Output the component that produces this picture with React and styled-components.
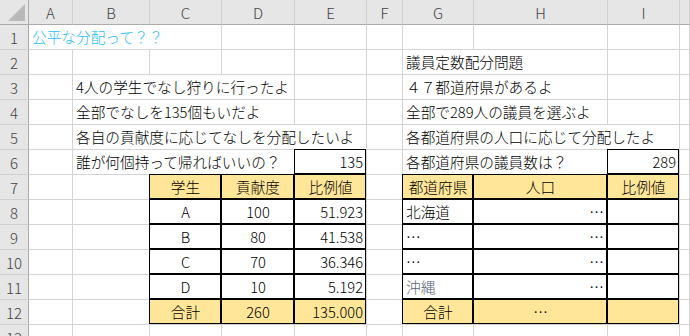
import React from 'react';
import styled, { createGlobalStyle } from 'styled-components';

const GlobalStyle = createGlobalStyle`
	html, body {
		margin: 0;
		padding: 0;
		background: #fff;
		overflow: hidden;
	}
`;

const COLUMNS = ['A', 'B', 'C', 'D', 'E', 'F', 'G', 'H', 'I', 'J'];

const Sheet = styled.div`
	display: grid;
	grid-template-columns: 29px 44px 77px 72px 73px 72px 36px 71px 134px 72px 1fr;
	grid-auto-rows: 25px;
	width: 690px;
	height: 336px;
	overflow: hidden;
	font-family: 'Noto Sans CJK JP', 'Noto Sans', sans-serif;
	font-size: 14.67px;
	font-weight: 300;
	color: #000;
`;

const Corner = styled.div`
	position: relative;
	background: #e6e6e6;
	border-right: 1px solid #ababab;
	border-bottom: 1px solid #ababab;
	box-sizing: border-box;
	display: flex;
	align-items: flex-end;
	justify-content: flex-end;
	padding: 0 3px 3px 0;

	svg {
		display: block;
	}
`;

const ColHead = styled.div`
	background: #e6e6e6;
	border-right: 1px solid #d0d0d0;
	border-bottom: 1px solid #ababab;
	box-sizing: border-box;
	display: flex;
	align-items: center;
	justify-content: center;
	color: #444;
	font-size: 15px;
	line-height: 1;
	padding-top: 1px;
`;

const RowHead = styled.div`
	background: #e6e6e6;
	border-right: 1px solid #ababab;
	border-bottom: 1px solid #d0d0d0;
	box-sizing: border-box;
	display: flex;
	align-items: center;
	justify-content: center;
	color: #444;
	font-size: 15px;
	line-height: 1;
	padding-top: 1px;
`;

const Cell = styled.div`
	position: relative;
	grid-column: span ${(p) => p.$span || 1};
	background: ${(p) => (p.$fill ? '#ffe699' : '#fff')};
	color: ${(p) => p.$color || '#000'};
	border-right: 1px solid #d4d4d4;
	border-bottom: 1px solid #d4d4d4;
	box-sizing: border-box;
	display: flex;
	align-items: center;
	justify-content: ${(p) =>
		p.$align === 'right' ? 'flex-end' : p.$align === 'center' ? 'center' : 'flex-start'};
	padding: 1px 3px 0;
	white-space: nowrap;
	overflow: visible;
	line-height: 1;

	${(p) =>
		p.$box &&
		`
		&::after {
			content: '';
			position: absolute;
			left: -1px;
			top: -1px;
			right: 0;
			bottom: 0;
			border: 1px solid #000;
			pointer-events: none;
			z-index: 1;
		}
	`}
`;

const HEAD = { align: 'center', fill: true, box: true };
const BODY = { box: true };

const rows = [
	{ A: { t: '公平な分配って？？', span: 3, color: '#2bbdf2' } },
	{ G: { t: '議員定数配分問題', span: 2 } },
	{
		B: { t: '4人の学生でなし狩りに行ったよ', span: 3 },
		G: { t: '４７都道府県があるよ', span: 2 },
	},
	{
		B: { t: '全部でなしを135個もいだよ', span: 3 },
		G: { t: '全部で289人の議員を選ぶよ', span: 2 },
	},
	{
		B: { t: '各自の貢献度に応じてなしを分配したいよ', span: 4 },
		G: { t: '各都道府県の人口に応じて分配したよ', span: 3 },
	},
	{
		B: { t: '誰が何個持って帰ればいいの？', span: 3 },
		E: { t: '135', align: 'right', box: true },
		G: { t: '各都道府県の議員数は？', span: 2 },
		I: { t: '289', align: 'right', box: true },
	},
	{
		C: { t: '学生', ...HEAD },
		D: { t: '貢献度', ...HEAD },
		E: { t: '比例値', ...HEAD },
		G: { t: '都道府県', ...HEAD },
		H: { t: '人口', ...HEAD },
		I: { t: '比例値', ...HEAD },
	},
	{
		C: { t: 'A', align: 'center', ...BODY },
		D: { t: '100', align: 'center', ...BODY },
		E: { t: '51.923', align: 'right', ...BODY },
		G: { t: '北海道', ...BODY },
		H: { t: '…', align: 'right', ...BODY },
		I: { ...BODY },
	},
	{
		C: { t: 'B', align: 'center', ...BODY },
		D: { t: '80', align: 'center', ...BODY },
		E: { t: '41.538', align: 'right', ...BODY },
		G: { t: '…', ...BODY },
		H: { t: '…', align: 'right', ...BODY },
		I: { ...BODY },
	},
	{
		C: { t: 'C', align: 'center', ...BODY },
		D: { t: '70', align: 'center', ...BODY },
		E: { t: '36.346', align: 'right', ...BODY },
		G: { t: '…', ...BODY },
		H: { t: '…', align: 'right', ...BODY },
		I: { ...BODY },
	},
	{
		C: { t: 'D', align: 'center', ...BODY },
		D: { t: '10', align: 'center', ...BODY },
		E: { t: '5.192', align: 'right', ...BODY },
		G: { t: '沖縄', color: '#55637a', ...BODY },
		H: { t: '…', align: 'right', ...BODY },
		I: { ...BODY },
	},
	{
		C: { t: '合計', ...HEAD },
		D: { t: '260', ...HEAD },
		E: { t: '135.000', ...HEAD, align: 'right' },
		G: { t: '合計', ...HEAD },
		H: { t: '…', ...HEAD },
		I: { ...HEAD },
	},
	{},
];

function SheetRow({ index, cells }) {
	const out = [<RowHead key='head'>{index}</RowHead>];
	let skip = 0;
	COLUMNS.forEach((col) => {
		if (skip > 0) {
			skip -= 1;
			return;
		}
		const c = cells[col];
		if (c) {
			skip = (c.span || 1) - 1;
			out.push(
				<Cell
					key={col}
					$span={c.span}
					$align={c.align}
					$fill={c.fill}
					$box={c.box}
					$color={c.color}
				>
					{c.t}
				</Cell>
			);
		} else {
			out.push(<Cell key={col} />);
		}
	});
	return out;
}

export default function App() {
	return (
		<>
			<GlobalStyle />
			<Sheet>
				<Corner>
					<svg width='17' height='17' viewBox='0 0 17 17'>
						<polygon points='17,0 17,17 0,17' fill='#b9b9b9' />
					</svg>
				</Corner>
				{COLUMNS.map((col) => (
					<ColHead key={col}>{col === 'J' ? '' : col}</ColHead>
				))}
				{rows.map((cells, i) => (
					<SheetRow key={i} index={i + 1} cells={cells} />
				))}
			</Sheet>
		</>
	);
}
